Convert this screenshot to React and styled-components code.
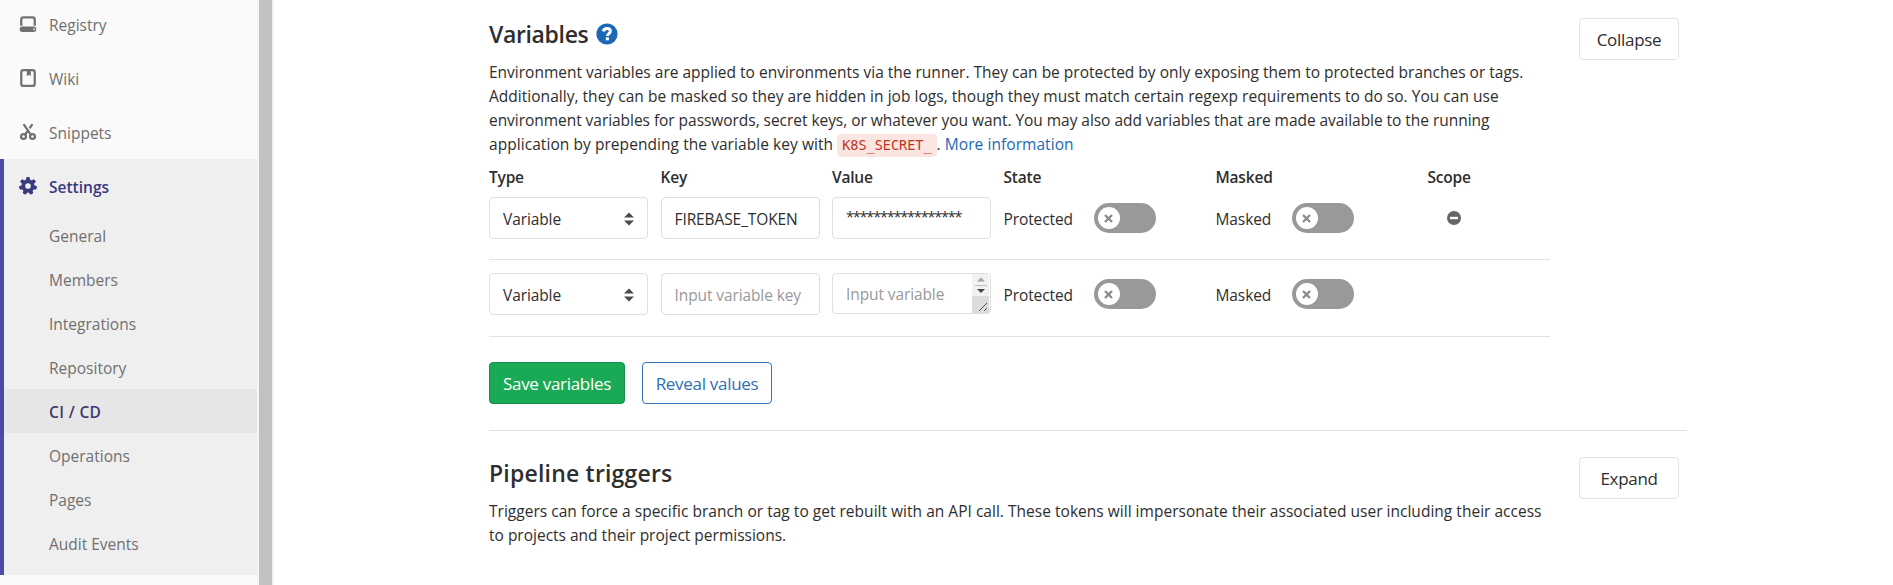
import React from "react";
import styled, { createGlobalStyle, css } from "styled-components";

const Global = createGlobalStyle`
  * { box-sizing: border-box; }
  body {
    margin: 0;
    background: #fff;
    color: #2e2e2e;
    font-family: "Open Sans", "Noto Sans", sans-serif;
    font-size: 15.5px;
    line-height: 24px;
    overflow: hidden;
  }
`;

const Page = styled.div`
  display: flex;
  height: 585px;
  overflow: hidden;
`;

/* ---------- sidebar ---------- */

const Sidebar = styled.nav`
  display: flex;
  flex-direction: column;
  flex: none;
  width: 259px;
  background: #fafafa;
  color: #707070;
  border-right: 2px solid #f5f5f5;
`;

const Scrollbar = styled.div`
  flex: none;
  width: 15px;
  background: #c1c1c1;
  border-right: 2px solid #f1f1f1;
`;

const NavItem = styled.a`
  display: flex;
  flex: none;
  align-items: center;
  height: 54px;
  padding: 2px 0 0 ${(p) => (p.$active ? 15 : 19)}px;
  gap: 12px;

  svg { flex: none; width: 18px; height: 18px; margin-top: -2px; }

  ${(p) =>
    p.$active &&
    css`
      color: #3a3a80;
      font-weight: 600;
    `}
`;

const NavTop = styled.div`
  height: 159px;
  display: flex;
  flex-direction: column;
  justify-content: flex-end;
`;

const ActiveGroup = styled.div`
  height: 416px;
  background: #efefef;
  border-left: 4px solid #4b4ba3;
`;

const SubItem = styled.a`
  display: flex;
  align-items: center;
  height: 44px;
  padding: 2px 0 0 45px;

  ${(p) =>
    p.$current &&
    css`
      color: #3a3a70;
      font-weight: 600;
      letter-spacing: 0.35px;
      background: #e6e6e6;
    `}
`;

/* ---------- content ---------- */

const Content = styled.main`
  flex: none;
  width: 1413px;
  padding-left: 215px;
`;

const Section = styled.section`
  display: flex;
  justify-content: space-between;
  align-items: flex-start;
  padding: ${(p) => (p.$first ? 18 : 26)}px 8px 26px 0;
  border-bottom: ${(p) => (p.$first ? "1px solid #e1e1e1" : "none")};
`;

const SectionBody = styled.div`
  width: 1060.5px;
`;

const Heading = styled.h4`
  display: flex;
  align-items: center;
  gap: 8px;
  margin: 0 0 10px;
  font-size: 23px;
  line-height: 32px;
  font-weight: 600;
  letter-spacing: ${(p) => p.$track}px;

  svg { width: 22px; height: 22px; }
`;

const Paragraph = styled.p`
  margin: 0;
`;

const Line = styled.span`
  display: block;
  height: 24px;
  white-space: nowrap;
  letter-spacing: ${(p) => p.$track || 0}px;
`;

const Code = styled.code`
  padding: 3px 5px 4px;
  border-radius: 4px;
  background: #fbe5e1;
  color: #c0341d;
  font-family: "DejaVu Sans Mono", monospace;
  font-size: 13.5px;
  line-height: 16px;
  letter-spacing: 0;
`;

const Link = styled.a`
  color: #1b69b6;
`;

const Button = styled.button`
  height: 42px;
  padding: 2px 0 0;
  width: ${(p) => p.$width}px;
  border: 1px solid #e3e3e3;
  border-radius: 4px;
  background: #fff;
  color: #2e2e2e;
  font: inherit;
  font-size: 17px;
  letter-spacing: -0.3px;

  ${(p) =>
    p.$kind === "success" &&
    css`
      border-color: #168f48;
      background: #1aaa55;
      color: #fff;
    `}
  ${(p) =>
    p.$kind === "info" &&
    css`
      border-color: #2f74bd;
      color: #2f6fb5;
    `}
`;

const Actions = styled.div`
  display: flex;
  gap: 17px;
  margin-top: 25px;
`;

/* ---------- variables table ---------- */

const Row = styled.div`
  display: grid;
  grid-template-columns: 159px 159px 159px 199.5px 199.5px 122px;
  column-gap: 12.5px;
  align-items: center;
`;

const HeaderRow = styled(Row)`
  margin: 9px 0 8px;
  font-weight: 600;
  letter-spacing: -0.2px;
`;

const VariableRow = styled(Row)`
  height: ${(p) => p.$height}px;
  padding-top: ${(p) => p.$top}px;
  align-items: start;
  border-bottom: 1px solid #e1e1e1;
`;

const Field = styled.div`
  display: flex;
  align-items: center;
  justify-content: space-between;
  height: ${(p) => (p.$short ? 41 : 42)}px;
  padding: ${(p) => (p.$short ? "0 1px 0 13px" : "1px 13px 0")};
  border: 1px solid #dfdfdf;
  border-radius: 4px;
  color: ${(p) => (p.$placeholder ? "#999" : "#2e2e2e")};
  white-space: nowrap;
  letter-spacing: -0.1px;
  overflow: hidden;

  svg { flex: none; }
`;

const MaskedValue = styled.span`
  padding-bottom: 3px;
  font-size: 14.5px;
  letter-spacing: -1.2px;
`;

const ToggleCell = styled.div`
  display: flex;
  align-items: center;
  height: 42px;
  padding-top: 1px;
`;

const ToggleLabel = styled.span`
  width: ${(p) => p.$width}px;
  letter-spacing: -0.1px;
`;

const Toggle = styled.span`
  display: flex;
  align-items: center;
  width: 62px;
  height: 30px;
  margin-top: -1px;
  padding-left: 4px;
  border-radius: 15px;
  background: #999;
`;

const Knob = styled.span`
  display: flex;
  align-items: center;
  justify-content: center;
  width: 22px;
  height: 22px;
  border-radius: 50%;
  background: #fff;
`;

const RemoveCell = styled.div`
  display: flex;
  align-items: center;
  height: 42px;
  padding-left: 19px;
`;

const ScrollColumn = styled.span`
  align-self: stretch;
  display: flex;
  flex-direction: column;
  align-items: center;
  width: 17px;
  background: linear-gradient(#f1f1f1 22px, #dcdcdc 22px);
`;

/* ---------- icons ---------- */

const DiskIcon = () => (
  <svg viewBox="0 0 16 16" fill="currentColor" fillRule="evenodd">
    <path d="M4 1h8a3 3 0 0 1 3 3v5.500h-2V4.200a1.200 1.200 0 0 0-1.200-1.200H4.200A1.200 1.200 0 0 0 3 4.200v5.300H1V4a3 3 0 0 1 3-3z" />
    <path d="M3 10.200h10a2.400 2.400 0 0 1 0 4.800H3a2.400 2.400 0 0 1 0-4.800zm9.800 1.500v1.800h1.200v-1.800z" />
  </svg>
);

const BookIcon = () => (
  <svg viewBox="0 0 16 16" fill="none" stroke="currentColor" strokeWidth="2">
    <rect x="2" y="1" width="12" height="14" rx="2" />
    <path d="M7 1.500h3.500v5L8.750 5.200 7 6.500z" fill="currentColor" stroke="none" />
  </svg>
);

const SnippetIcon = () => (
  <svg viewBox="0 0 16 16" fill="none" stroke="currentColor" strokeWidth="2" strokeLinecap="round">
    <circle cx="4" cy="12" r="2.200" />
    <circle cx="12" cy="12" r="2.200" />
    <path d="M4.500 1.700l6 8.600M11.500 1.700L9.900 4M7 8l-1.500 2.200" />
  </svg>
);

const GearIcon = () => (
  <svg viewBox="-8 -8 16 16">
    <g fill="currentColor">
      {[0, 51.4, 102.9, 154.3, 205.7, 257.1, 308.6].map((a) => (
        <rect key={a} x="-1.700" y="-8" width="3.400" height="4" rx="1.200" transform={`rotate(${a})`} />
      ))}
    </g>
    <circle r="4.200" fill="none" stroke="currentColor" strokeWidth="3.400" />
  </svg>
);

const HelpIcon = () => (
  <svg viewBox="0 0 22 22">
    <circle cx="11" cy="11" r="10.600" fill="#1b69b6" />
    <path d="M7.300 8.400C7.700 6.300 9.200 5.500 11 5.500c2 0 3.400 1.100 3.400 2.800 0 2.300-3 2.400-3 4.700" fill="none" stroke="#fff" strokeWidth="3" />
    <rect x="9.800" y="14.300" width="3.100" height="3" fill="#fff" />
  </svg>
);

const SortIcon = () => (
  <svg width="10" height="14" viewBox="0 0 10 14" fill="#4a4a4a">
    <path d="M5 0.500L10 5.500H0zM5 13.500L0 8.500h10z" />
  </svg>
);

const CrossIcon = () => (
  <svg width="9" height="9" viewBox="0 0 9 9" stroke="#8c8c8c" strokeWidth="2.400">
    <path d="M1 1l7 7M8 1L1 8" />
  </svg>
);

const MinusIcon = () => (
  <svg width="14" height="14" viewBox="0 0 14 14">
    <circle cx="7" cy="7" r="7" fill="#666" />
    <rect x="3" y="5.800" width="8" height="2.400" fill="#fff" />
  </svg>
);

const ScrollArrows = () => (
  <svg width="17" height="39" viewBox="0 0 17 39">
    <path d="M5 7.500h8L9 3.500z" fill="#a3a3a3" />
    <path d="M3 11.500h12" stroke="#bdbdbd" />
    <path d="M5 15h8l-4 4z" fill="#444" />
    <path d="M7 37l8-8M12 37l3-3" stroke="#555" fill="none" />
  </svg>
);

/* ---------- page ---------- */

const subItems = ["General", "Members", "Integrations", "Repository", "CI / CD", "Operations", "Pages", "Audit Events"];

const Switch = ({ label, labelWidth }) => (
  <ToggleCell>
    <ToggleLabel $width={labelWidth}>{label}</ToggleLabel>
    <Toggle>
      <Knob><CrossIcon /></Knob>
    </Toggle>
  </ToggleCell>
);

export default function App() {
  return (
    <Page>
      <Global />
      <Sidebar>
        <NavTop>
          <NavItem><DiskIcon />Registry</NavItem>
          <NavItem><BookIcon />Wiki</NavItem>
          <NavItem><SnippetIcon />Snippets</NavItem>
        </NavTop>
        <ActiveGroup>
          <NavItem $active><GearIcon />Settings</NavItem>
          {subItems.map((name) => (
            <SubItem key={name} $current={name === "CI / CD"}>{name}</SubItem>
          ))}
        </ActiveGroup>
      </Sidebar>
      <Scrollbar />
      <Content>
        <Section $first>
          <SectionBody>
            <Heading $track={-0.35}>Variables <HelpIcon /></Heading>
            <Paragraph>
              <Line>
                Environment variables are applied to environments via the runner. They can be protected by only
                exposing them to protected branches or tags.
              </Line>
              <Line $track={0.026}>
                Additionally, they can be masked so they are hidden in job logs, though they must match certain
                regexp requirements to do so. You can use
              </Line>
              <Line $track={-0.044}>
                environment variables for passwords, secret keys, or whatever you want. You may also add variables
                that are made available to the running
              </Line>
              <Line $track={0.06}>
                application by prepending the variable key with <Code>K8S_SECRET_</Code>.{" "}
                <Link>More information</Link>
              </Line>
            </Paragraph>
            <HeaderRow>
              <span>Type</span>
              <span>Key</span>
              <span>Value</span>
              <span>State</span>
              <span>Masked</span>
              <span>Scope</span>
            </HeaderRow>
            <VariableRow $height={63} $top={0}>
              <Field>Variable <SortIcon /></Field>
              <Field>FIREBASE_TOKEN</Field>
              <Field><MaskedValue>*****************</MaskedValue></Field>
              <Switch label="Protected" labelWidth={90} />
              <Switch label="Masked" labelWidth={76} />
              <RemoveCell><MinusIcon /></RemoveCell>
            </VariableRow>
            <VariableRow $height={77} $top={13}>
              <Field>Variable <SortIcon /></Field>
              <Field $placeholder>Input variable key</Field>
              <Field $placeholder $short>
                Input variable
                <ScrollColumn><ScrollArrows /></ScrollColumn>
              </Field>
              <Switch label="Protected" labelWidth={90} />
              <Switch label="Masked" labelWidth={76} />
            </VariableRow>
            <Actions>
              <Button $kind="success" $width={136}>Save variables</Button>
              <Button $kind="info" $width={130}>Reveal values</Button>
            </Actions>
          </SectionBody>
          <Button $width={100}>Collapse</Button>
        </Section>
        <Section>
          <SectionBody>
            <Heading $track={0.2}>Pipeline triggers</Heading>
            <Paragraph>
              <Line $track={0.02}>
                Triggers can force a specific branch or tag to get rebuilt with an API call. These tokens will
                impersonate their associated user including their access
              </Line>
              <Line>to projects and their project permissions.</Line>
            </Paragraph>
          </SectionBody>
          <Button $width={100}>Expand</Button>
        </Section>
      </Content>
    </Page>
  );
}
